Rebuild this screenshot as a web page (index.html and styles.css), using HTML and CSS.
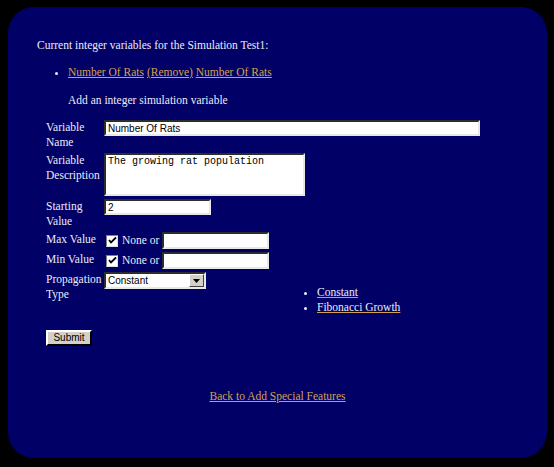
FILE: index.html
```html
<!DOCTYPE html>
<html>
<head>
<meta charset="utf-8">
<title>Integer Variables</title>
<link rel="stylesheet" href="styles.css">
</head>
<body>
<div class="panel">
  <p class="intro">Current integer variables for the Simulation Test1:</p>
  <ul class="vars">
    <li><a href="#">Number Of Rats</a> <a href="#">(Remove)</a> <a href="#">Number Of Rats</a></li>
  </ul>
  <p class="add">Add an integer simulation variable</p>
  <form class="form">
    <div class="lbl">Variable<br>Name</div>
    <div class="fld"><input class="txt wide" type="text" value="Number Of Rats"></div>

    <div class="lbl">Variable<br>Description</div>
    <div class="fld"><textarea class="area">The growing rat population</textarea></div>

    <div class="lbl">Starting<br>Value</div>
    <div class="fld"><input class="txt short" type="text" value="2"></div>

    <div class="lbl">Max Value</div>
    <div class="fld row"><span class="chk"><svg width="9" height="9" viewBox="0 0 9 9"><path d="M1 4 L3 6.5 L8 1.5" fill="none" stroke="#000" stroke-width="1.8"/></svg></span><span class="none">None or</span><input class="txt short tall" type="text"></div>

    <div class="lbl">Min Value</div>
    <div class="fld row"><span class="chk"><svg width="9" height="9" viewBox="0 0 9 9"><path d="M1 4 L3 6.5 L8 1.5" fill="none" stroke="#000" stroke-width="1.8"/></svg></span><span class="none">None or</span><input class="txt short tall" type="text"></div>

    <div class="lbl">Propagation<br>Type</div>
    <div class="fld prop">
      <div class="sel"><span class="seltext">Constant</span><span class="selbtn"><svg width="7" height="4" viewBox="0 0 7 4"><path d="M0 0 H7 L3.5 4 Z" fill="#000"/></svg></span></div>
      <ul class="opts">
        <li><a href="#" class="v">Constant</a></li>
        <li><a href="#" class="v">Fibonacci Growth</a></li>
      </ul>
    </div>

    <div class="submitrow"><button type="button" class="btn">Submit</button></div>
  </form>
  <p class="back"><a href="#">Back to Add Special Features</a></p>
</div>
</body>
</html>
```
FILE: styles.css
```css
html, body {
  margin: 0;
  padding: 0;
}
body {
  width: 554px;
  height: 467px;
  box-sizing: border-box;
  padding: 7px 7px 9px 8px;
  background-color: #000;
  background-image:
    radial-gradient(circle at 13px 21px, #7a7a7a 0.6px, transparent 1.1px),
    radial-gradient(circle at 61px 47px, #5e5e5e 0.6px, transparent 1.1px),
    radial-gradient(circle at 37px 53px, #6a6a6a 0.6px, transparent 1.1px);
  background-size: 131px 113px, 157px 97px, 109px 139px;
  font-family: "Liberation Serif", "Times New Roman", serif;
  font-size: 11.5px;
  line-height: 15px;
  color: #ececf8;
  overflow: hidden;
}
.panel {
  width: 539px;
  height: 451px;
  box-sizing: border-box;
  background: #000066;
  border-radius: 26px;
  padding: 31px 20px 0 29px;
  display: flex;
  flex-direction: column;
}
a {
  color: #d4a050;
  text-decoration: underline;
}
a.v {
  color: #ececf8;
  text-decoration-color: #d4a050;
}
.intro {
  margin: 0;
}
.vars {
  margin: 12px 0 0 0;
  padding-left: 31px;
  list-style: disc;
}
.add {
  margin: 13px 0 0 31px;
}
.form {
  margin: 12px 0 0 9px;
  display: grid;
  grid-template-columns: 58px 1fr;
  row-gap: 3px;
  align-items: start;
}
.lbl {
  white-space: nowrap;
}
.fld {
  min-width: 0;
}
.row {
  display: flex;
  align-items: center;
  height: 17px;
}
.txt {
  box-sizing: border-box;
  height: 16px;
  margin: 0;
  padding: 0 2px;
  border: 2px inset #d4d0c8;
  border-top-color: #808080;
  border-left-color: #808080;
  border-right-color: #e8e8e8;
  border-bottom-color: #e8e8e8;
  background: #fff;
  font-family: "Liberation Sans", Arial, sans-serif;
  font-size: 10px;
  color: #000;
  outline: none;
}
.wide { width: 376px; }
.short { width: 107px; }
.tall { height: 17px; }
.area {
  box-sizing: border-box;
  display: block;
  width: 201px;
  height: 43px;
  margin: 0;
  padding: 1px 2px;
  border: 2px inset #d4d0c8;
  border-top-color: #808080;
  border-left-color: #808080;
  border-right-color: #e8e8e8;
  border-bottom-color: #e8e8e8;
  background: #fff;
  font-family: "Liberation Mono", "Courier New", monospace;
  font-size: 10px;
  line-height: 12px;
  color: #000;
  resize: none;
  outline: none;
}
.chk {
  box-sizing: border-box;
  width: 12px;
  height: 12px;
  margin-left: 2px;
  background: #fff;
  border: 1px solid #808080;
  border-right-color: #ddd;
  border-bottom-color: #ddd;
  display: flex;
  align-items: center;
  justify-content: center;
}
.none {
  margin: 0 3px 0 4px;
}
.prop {
  display: flex;
  align-items: flex-start;
}
.sel {
  box-sizing: border-box;
  width: 102px;
  height: 17px;
  background: #fff;
  border: 2px inset #d4d0c8;
  border-top-color: #808080;
  border-left-color: #808080;
  border-right-color: #e8e8e8;
  border-bottom-color: #e8e8e8;
  display: flex;
  align-items: stretch;
  font-family: "Liberation Sans", Arial, sans-serif;
  font-size: 10px;
  line-height: 13px;
  color: #000;
  flex-shrink: 0;
}
.seltext {
  flex: 1;
  padding-left: 2px;
}
.selbtn {
  width: 13px;
  background: #d4d0c8;
  border: 1px solid;
  border-color: #fff #404040 #404040 #fff;
  display: flex;
  align-items: center;
  justify-content: center;
}
.opts {
  margin: 13px 0 0 99px;
  padding-left: 12px;
  list-style: disc;
}
.submitrow {
  grid-column: 1 / 3;
  margin-top: 12px;
}
.btn {
  box-sizing: border-box;
  width: 46px;
  height: 16px;
  margin: 0;
  padding: 0;
  background: #d4d0c8;
  border: 2px outset #d4d0c8;
  border-color: #fff #404040 #404040 #fff;
  font-family: "Liberation Sans", Arial, sans-serif;
  font-size: 10px;
  line-height: 12px;
  color: #000;
}
.back {
  margin: 43px 0 0 -9px;
  text-align: center;
}
```
